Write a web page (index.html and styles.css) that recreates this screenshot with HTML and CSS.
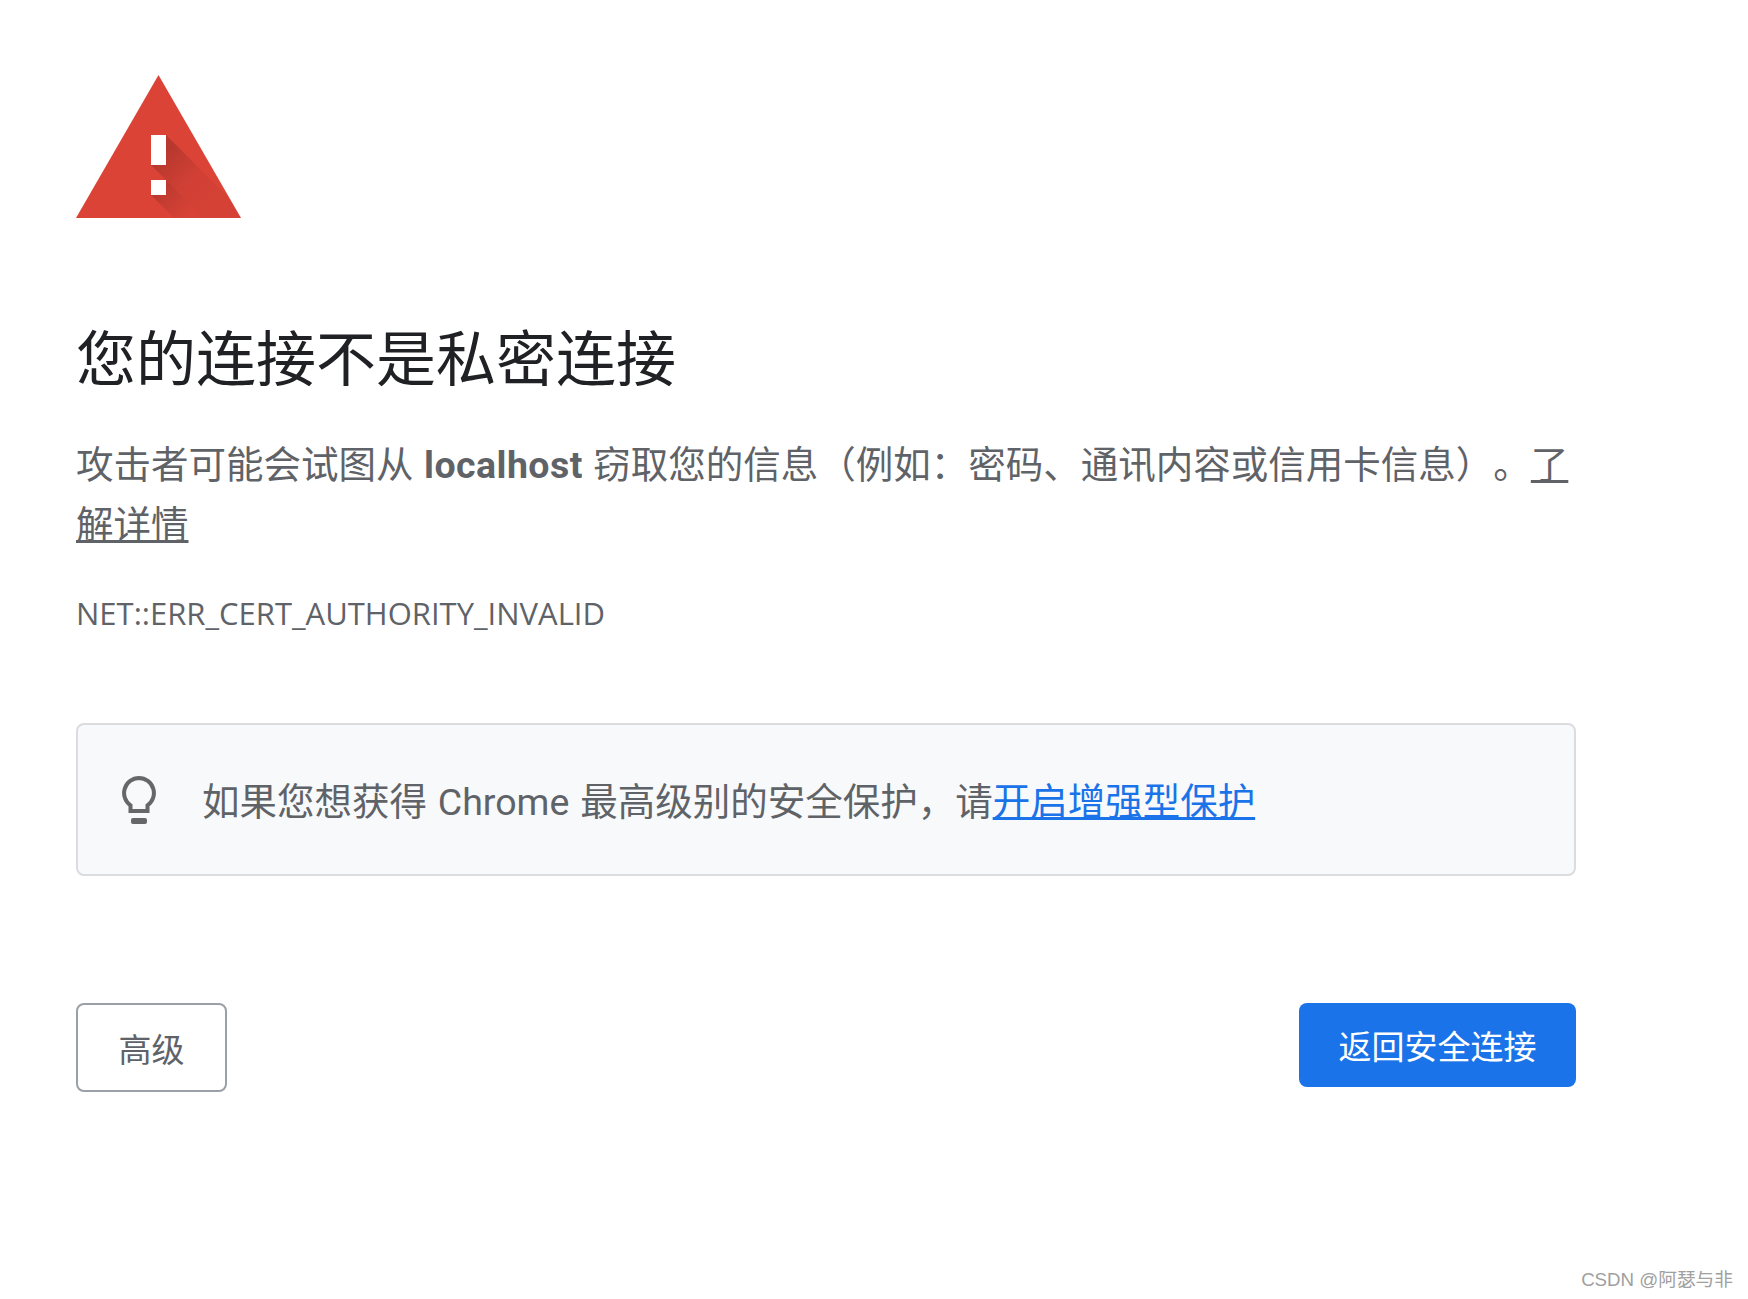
FILE: index.html
```html
<!DOCTYPE html>
<html lang="zh-CN">

<head>
    <meta charset="UTF-8">
    <title>隐私设置错误</title>
    <link rel="stylesheet" href="styles.css">
</head>

<body>

<div class="interstitial">
    <!-- Warnsymbol -->
    <svg class="warn-icon" viewBox="0 0 165 143" width="165" height="143">
        <defs>
            <linearGradient id="shade" gradientUnits="userSpaceOnUse" x1="85" y1="80" x2="140" y2="135">
                <stop offset="0" stop-color="#000" stop-opacity="0.17"/>
                <stop offset="0.5" stop-color="#000" stop-opacity="0.05"/>
                <stop offset="1" stop-color="#000" stop-opacity="0.03"/>
            </linearGradient>
            <linearGradient id="shadeDot" gradientUnits="userSpaceOnUse" x1="78" y1="112" x2="108" y2="142">
                <stop offset="0" stop-color="#000" stop-opacity="0.17"/>
                <stop offset="1" stop-color="#000" stop-opacity="0.02"/>
            </linearGradient>
        </defs>
        <polygon points="82.5,0 165,143 0,143" fill="#dc4337"/>
        <polygon points="90,60 154,124 165,143 128,143 75,90" fill="url(#shade)"/>
        <polygon points="90,105 128,143 98,143 75,120" fill="url(#shadeDot)"/>
        <rect x="75" y="60" width="15" height="30" fill="#fff"/>
        <rect x="75" y="105" width="15" height="15" fill="#fff"/>
    </svg>

    <h1 class="title">您的连接不是私密连接</h1>

    <p class="message">攻击者可能会试图从 <strong>localhost</strong> 窃取您的信息（例如：密码、通讯内容或信用卡信息）。<a href="#" class="learn-more">了解详情</a></p>

    <div class="error-code">NET::ERR_CERT_AUTHORITY_INVALID</div>

    <div class="tip-box">
        <svg class="bulb-icon" viewBox="0 0 34 48" width="34" height="48">
            <path d="M17 2a15 15 0 0 0-8.500 27.300V35h17v-5.700a15 15 0 0 0-8.500-27.300z" fill="none" stroke="#676767" stroke-width="4"/>
            <rect x="9" y="42" width="16" height="6" rx="2" fill="#676767"/>
        </svg>
        <span class="tip-text">如果您想获得 Chrome 最高级别的安全保护，请<a href="#" class="tip-link">开启增强型保护</a></span>
    </div>

    <div class="button-row">
        <button class="button button-advanced">高级</button>
        <button class="button button-back">返回安全连接</button>
    </div>
</div>

<div class="watermark">CSDN @阿瑟与非</div>

</body>

</html>
```

FILE: styles.css
```css
body {
    margin: 0;
    background-color: #fff;
    color: #5f6368;
    font-family: Roboto, "Noto Sans CJK SC", sans-serif;
    text-spacing-trim: space-all;
    overflow: hidden;
}

.interstitial {
    width: 1576px;
    height: 1299px;
    padding: 75px 0 0 76px;
    box-sizing: border-box;
}

.warn-icon {
    display: block;
}

.title {
    margin: 99px 0 0;
    font-size: 60px;
    line-height: 88px;
    font-weight: 400;
    color: #202124;
}

.message {
    margin: 30px 0 0;
    font-size: 37.5px;
    line-height: 60px;
    word-spacing: 1.2px;
}

.message strong {
    letter-spacing: 0.45px;
}

.learn-more {
    color: #5f6368;
}

.error-code {
    margin-top: 36px;
    font-family: "Open Sans", sans-serif;
    font-size: 31px;
    line-height: 44px;
}

.tip-box {
    display: flex;
    align-items: center;
    gap: 46px;
    height: 153px;
    margin-top: 88px;
    padding-left: 44px;
    box-sizing: border-box;
    background-color: #f8f9fa;
    border: 2px solid #dadce0;
    border-radius: 8px;
    font-size: 37.5px;
}

.tip-text {
    padding-bottom: 3px;
    word-spacing: 1.5px;
}

.tip-link {
    color: #1a73e8;
}

.button-row {
    display: flex;
    justify-content: space-between;
    align-items: flex-start;
    margin-top: 127px;
}

.button {
    font-family: inherit;
    font-size: 33px;
    border-radius: 8px;
    box-sizing: border-box;
    padding: 0;
}

.button-advanced {
    width: 151px;
    height: 89px;
    background-color: #fff;
    border: 2px solid #9aa0a6;
    color: #5f6368;
}

.button-back {
    width: 277px;
    height: 84px;
    background-color: #1a73e8;
    border: none;
    color: #fff;
}

.watermark {
    position: absolute;
    right: 15px;
    bottom: 8px;
    font-family: "Liberation Sans", "Noto Sans CJK SC", sans-serif;
    font-size: 18.7px;
    color: #a0a0a0;
}
```
